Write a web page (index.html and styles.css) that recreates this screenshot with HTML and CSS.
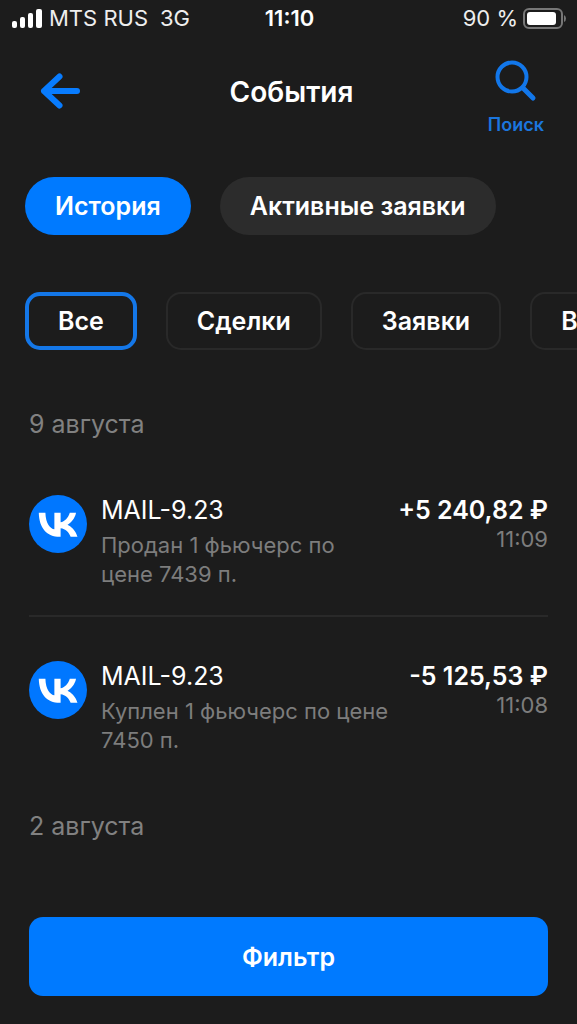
FILE: index.html
```html
<!DOCTYPE html>
<html lang="ru">
<head>
<meta charset="utf-8">
<meta name="viewport" content="width=device-width, initial-scale=1">
<title>События</title>
<link rel="stylesheet" href="styles.css">
</head>
<body>
<svg class="sprite" aria-hidden="true">
  <symbol id="vk" viewBox="0 0 48 48">
    <circle cx="24" cy="24" r="24" fill="#0077ff"/>
    <path fill="#fff" d="M25.54 34.58c-10.94 0-17.18-7.5-17.44-19.98h5.48c.18 9.16 4.22 13.04 7.42 13.84V14.6h5.16v7.9c3.16-.34 6.48-3.94 7.6-7.9h5.16c-.86 4.88-4.46 8.48-7.02 9.96 2.56 1.2 6.66 4.34 8.22 10.02h-5.68c-1.22-3.8-4.26-6.74-8.28-7.14v7.14z"/>
  </symbol>
</svg>
<div class="screen">
  <div class="status">
    <div class="status-left">
      <svg class="signal" viewBox="0 0 30 19" aria-hidden="true">
        <rect x="0" y="12" width="5" height="7" rx="2"/>
        <rect x="8" y="8" width="5" height="11" rx="2"/>
        <rect x="16" y="4" width="5" height="15" rx="2"/>
        <rect x="24" y="0" width="6" height="19" rx="2"/>
      </svg>
      <span class="carrier">MTS RUS</span>
      <span>3G</span>
    </div>
    <span class="clock">11:10</span>
    <div class="status-right">
      <span>90 %</span>
      <svg class="battery" viewBox="0 0 44 21" aria-hidden="true">
        <rect x="1" y="1" width="38" height="19" rx="5" fill="none" stroke="#777" stroke-width="2"/>
        <rect x="4" y="4" width="29" height="13" rx="3" fill="#fff"/>
        <path d="M41 7q2 1 2 3.500t-2 3.500z" fill="#777"/>
      </svg>
    </div>
  </div>

  <header class="header">
    <button class="back" type="button" aria-label="Назад">
      <svg viewBox="0 0 42 38" aria-hidden="true"><path d="M38 19H5M20.500 4.500L5 19l15.500 14.500"/></svg>
    </button>
    <h1 class="title">События</h1>
    <button class="search" type="button">
      <svg viewBox="0 0 42 42" aria-hidden="true"><circle cx="17" cy="17" r="14.500"/><path class="handle" d="M28 28l10 10"/></svg>
      <span>Поиск</span>
    </button>
  </header>

  <nav class="tabs">
    <button class="tab tab-active" type="button">История</button>
    <button class="tab" type="button">Активные заявки</button>
  </nav>

  <div class="filters">
    <button class="filter filter-active" type="button">Все</button>
    <button class="filter" type="button">Сделки</button>
    <button class="filter" type="button">Заявки</button>
    <button class="filter" type="button">Выплаты</button>
  </div>

  <main class="events">
    <h2 class="date">9 августа</h2>
    <article class="event">
      <svg class="logo" role="img" aria-label="VK"><use href="#vk"/></svg>
      <div class="info">
        <h3 class="name">MAIL-9.23</h3>
        <p class="desc">Продан 1 фьючерс по цене 7439 п.</p>
      </div>
      <div class="sum">
        <div class="amount">+5 240,82 ₽</div>
        <time class="time">11:09</time>
      </div>
    </article>
    <article class="event">
      <svg class="logo" role="img" aria-label="VK"><use href="#vk"/></svg>
      <div class="info">
        <h3 class="name">MAIL-9.23</h3>
        <p class="desc">Куплен 1 фьючерс по цене 7450 п.</p>
      </div>
      <div class="sum">
        <div class="amount">-5 125,53 ₽</div>
        <time class="time">11:08</time>
      </div>
    </article>
    <h2 class="date">2 августа</h2>
  </main>

  <footer class="footer">
    <button class="apply" type="button">Фильтр</button>
  </footer>
</div>
</body>
</html>
```
FILE: styles.css
```css
* {
  box-sizing: border-box;
}

body {
  margin: 0;
  background: #1c1c1c;
  color: #fff;
  font-family: Inter, "Liberation Sans", sans-serif;
  font-size: 25px;
}

button {
  border: 0;
  padding: 0;
  background: none;
  color: inherit;
  font: inherit;
  cursor: pointer;
}

h1, h2, h3, p {
  margin: 0;
  font-weight: 400;
}

.sprite {
  position: absolute;
  width: 0;
  height: 0;
}

.screen {
  display: flex;
  flex-direction: column;
  min-height: 100vh;
  overflow: hidden;
}

.status {
  display: grid;
  grid-template-columns: 1fr auto 1fr;
  align-items: center;
  height: 36px;
  padding: 0 10px 0 12px;
  font-size: 22px;
  color: #eee;
}

.status-left,
.status-right {
  display: flex;
  align-items: center;
}

.status-right {
  justify-content: flex-end;
  gap: 5px;
}

.signal {
  width: 30px;
  height: 19px;
  margin-right: 7px;
  fill: #fff;
}

.carrier {
  margin-right: 12px;
}

.clock {
  font-weight: 600;
  color: #fff;
}

.battery {
  width: 44px;
  height: 21px;
}

.header {
  display: grid;
  grid-template-columns: 1fr auto 1fr;
  align-items: start;
  padding: 24px 33px 0 39px;
}

.back {
  justify-self: start;
  height: 38px;
  margin-top: 12px;
}

.back svg {
  display: block;
  width: 42px;
  height: 38px;
  fill: none;
  stroke: #087cff;
  stroke-width: 6;
  stroke-linecap: round;
  stroke-linejoin: round;
}

.title {
  margin-top: 14px;
  font-size: 28px;
  line-height: 36px;
  font-weight: 600;
}

.search {
  display: flex;
  flex-direction: column;
  align-items: center;
  justify-self: end;
  gap: 12px;
  color: #1b76de;
  font-size: 18px;
  line-height: 22px;
  font-weight: 600;
}

.search svg {
  width: 42px;
  height: 42px;
  fill: none;
  stroke: #1277ea;
  stroke-width: 4;
  stroke-linecap: round;
}

.search .handle {
  stroke-width: 5;
}

.tabs,
.filters {
  display: flex;
  gap: 29px;
  padding: 0 25px;
  font-weight: 600;
}

.tabs {
  margin-top: 41px;
}

.filters {
  margin-top: 57px;
  overflow: hidden;
}

.tab,
.filter {
  flex: none;
  height: 58px;
}

.tab {
  padding: 0 30px;
  border-radius: 29px;
  background: #2c2c2c;
}

.tab-active {
  background: #007aff;
}

.filter {
  padding: 0 29px;
  border: 2px solid #292929;
  border-radius: 15px;
}

.filter-active {
  border: 4px solid #1477e8;
}

.events {
  flex: 1;
  padding: 58px 29px 0;
}

.date {
  font-size: 25px;
  line-height: 32px;
  color: #818181;
}

.event {
  display: flex;
  gap: 14px;
  padding: 44px 0 26px;
}

.date + .event {
  padding-top: 55px;
}

.event + .event {
  border-top: 2px solid #292929;
}

.event + .date {
  padding-top: 29px;
}

.logo {
  flex: none;
  width: 58px;
  height: 58px;
}

.info {
  flex: 1;
}

.name,
.amount {
  font-size: 25px;
  line-height: 30px;
}

.desc {
  margin-top: 6px;
  color: #7d7d7d;
  font-size: 22px;
  line-height: 29px;
}

.sum {
  text-align: right;
  white-space: nowrap;
}

.amount {
  font-weight: 600;
}

.time {
  display: block;
  color: #7d7d7d;
  font-size: 22px;
  line-height: 28px;
}

.footer {
  padding: 0 29px 28px;
}

.apply {
  width: 100%;
  height: 79px;
  border-radius: 14px;
  background: #007aff;
  font-weight: 600;
}
```
